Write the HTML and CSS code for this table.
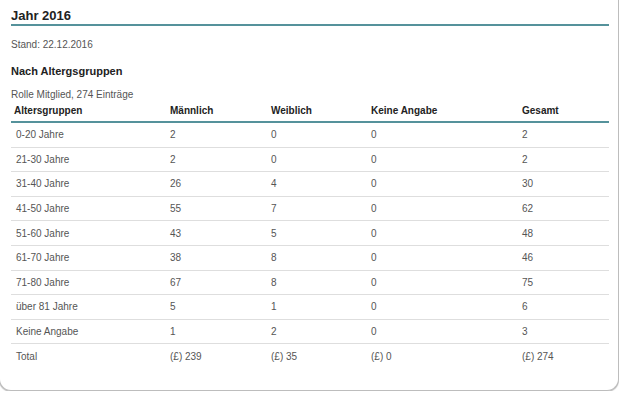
FILE: index.html
```html
<!DOCTYPE html>
<html lang="de">
<head>
<meta charset="utf-8">
<title>Jahr 2016</title>
<link rel="stylesheet" href="styles.css">
</head>
<body>
<div class="card">
  <h2 class="title">Jahr 2016</h2>
  <p class="stand">Stand: 22.12.2016</p>
  <h3 class="subtitle">Nach Altergsgruppen</h3>
  <p class="caption">Rolle Mitglied, 274 Einträge</p>
  <table class="stats">
    <colgroup>
      <col class="c1"><col class="c2"><col class="c3"><col class="c4"><col class="c5">
    </colgroup>
    <thead>
      <tr><th>Altersgruppen</th><th>Männlich</th><th>Weiblich</th><th>Keine Angabe</th><th>Gesamt</th></tr>
    </thead>
    <tbody>
      <tr><td>0-20 Jahre</td><td>2</td><td>0</td><td>0</td><td>2</td></tr>
      <tr><td>21-30 Jahre</td><td>2</td><td>0</td><td>0</td><td>2</td></tr>
      <tr><td>31-40 Jahre</td><td>26</td><td>4</td><td>0</td><td>30</td></tr>
      <tr><td>41-50 Jahre</td><td>55</td><td>7</td><td>0</td><td>62</td></tr>
      <tr><td>51-60 Jahre</td><td>43</td><td>5</td><td>0</td><td>48</td></tr>
      <tr><td>61-70 Jahre</td><td>38</td><td>8</td><td>0</td><td>46</td></tr>
      <tr><td>71-80 Jahre</td><td>67</td><td>8</td><td>0</td><td>75</td></tr>
      <tr><td>über 81 Jahre</td><td>5</td><td>1</td><td>0</td><td>6</td></tr>
      <tr><td>Keine Angabe</td><td>1</td><td>2</td><td>0</td><td>3</td></tr>
      <tr class="total"><td>Total</td><td>(£) 239</td><td>(£) 35</td><td>(£) 0</td><td>(£) 274</td></tr>
    </tbody>
  </table>
</div>
</body>
</html>
```
FILE: styles.css
```css
html, body {
  margin: 0;
  padding: 0;
  background: #ffffff;
}
body {
  font-family: "Liberation Sans", Arial, sans-serif;
  color: #555;
  overflow: hidden;
}
.card {
  box-sizing: border-box;
  width: 620px;
  height: 392px;
  margin: -1px 0 0 -1px;
  padding: 9px 9px 0 11px;
  border: 1px solid #bdbdbd;
  border-top: none;
  border-radius: 0 0 12px 12px;
  box-shadow: 0 1px 1px rgba(0,0,0,0.25);
  background: #fff;
}
.title {
  margin: 0;
  font-size: 13px;
  line-height: 16px;
  font-weight: bold;
  color: #222;
  border-bottom: 2px solid #55929b;
}
.stand {
  margin: 12px 0 0;
  font-size: 10px;
  line-height: 13px;
  color: #555;
}
.subtitle {
  margin: 13px 0 0;
  font-size: 11px;
  line-height: 14px;
  font-weight: bold;
  color: #222;
}
.caption {
  margin: 10px 0 0;
  font-size: 10px;
  line-height: 13px;
  color: #555;
}
.stats {
  width: 598px;
  border-collapse: collapse;
  table-layout: fixed;
  margin-top: 0;
  font-size: 10px;
}
.c1 { width: 155px; }
.c2 { width: 101px; }
.c3 { width: 100px; }
.c4 { width: 151px; }
.c5 { width: 91px; }
.stats th {
  text-align: left;
  font-weight: bold;
  color: #222;
  padding: 3px 4px 4px;
  line-height: 13px;
  border-bottom: 2px solid #55929b;
}
.stats th:first-child { padding-left: 3px; }
.stats td {
  height: 23.6px;
  padding: 0 4px;
  line-height: 13px;
  vertical-align: middle;
  border-bottom: 1px solid #dedede;
  color: #555;
}
.stats td:first-child { padding-left: 5px; }
.stats tr.total td { border-bottom: none; }
```
